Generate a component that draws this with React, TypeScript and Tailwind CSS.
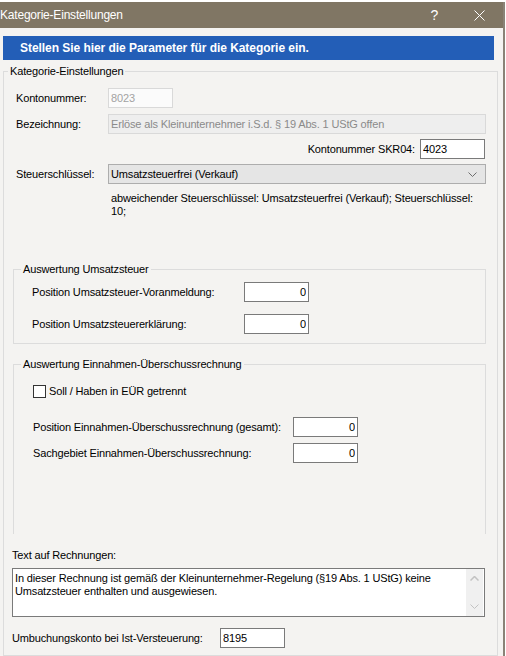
import React from 'react';

// Editable text box in the classic Windows style
const Field: React.FC<{ value: string; width: string; right?: boolean }> = ({ value, width, right }) => (
  <input
    readOnly
    value={value}
    className={`${width} h-[20px] shrink-0 bg-white border border-[#7a7a7a] px-[2px] text-[11px] text-black outline-none ${
      right ? 'text-right' : ''
    }`}
  />
);

const ChevronDown: React.FC<{ color?: string }> = ({ color = '#6d6d6d' }) => (
  <svg width="9" height="5" viewBox="0 0 9 5" fill="none">
    <path d="M0.5 0.5 L4.5 4.5 L8.5 0.5" stroke={color} strokeWidth="1" />
  </svg>
);

const ChevronUp: React.FC<{ color?: string }> = ({ color = '#c2c2c2' }) => (
  <svg width="9" height="5" viewBox="0 0 9 5" fill="none">
    <path d="M0.5 4.5 L4.5 0.5 L8.5 4.5" stroke={color} strokeWidth="1.5" />
  </svg>
);

export default function App() {
  return (
    <div className="w-[506px] h-[656px] overflow-hidden bg-white flex flex-col font-['Liberation_Sans',Arial,sans-serif] text-[11px] tracking-[-0.15px] text-black">
      <div className="h-[2px] shrink-0 bg-white" />

      {/* dialog window */}
      <div className="flex-1 min-h-0 w-[505px] flex flex-col bg-[#f4f3f1] border-r-2 border-[#8a8377]">
        {/* title bar */}
        <div className="h-[26px] shrink-0 bg-[#807664] flex items-center text-white text-[12px] tracking-[-0.2px]">
          <span>Kategorie-Einstellungen</span>
          <span className="ml-auto text-[14px] leading-none">?</span>
          <svg className="ml-[36px] mr-[18px]" width="11" height="11" viewBox="0 0 11 11" fill="none">
            <path d="M0.5 0.5 L10.5 10.5 M10.5 0.5 L0.5 10.5" stroke="#ffffff" strokeWidth="1" />
          </svg>
        </div>

        {/* header banner */}
        <div className="mt-[8px] ml-[3px] w-[491px] h-[24px] shrink-0 bg-[#235eb7] flex items-center pl-[17px] text-white font-bold text-[12px] tracking-[-0.05px]">
          Stellen Sie hier die Parameter für die Kategorie ein.
        </div>

        <fieldset className="mt-[4px] ml-[3px] w-[495px] flex-1 min-h-0 min-w-0 border border-[#dcdcdc]">
          <legend className="ml-[4px] px-[2px] leading-[14px]">Kategorie-Einstellungen</legend>

          <div className="pt-[10px] flex flex-col">
            <div className="flex items-center h-[20px] pl-[12px]">
              <span className="w-[92px]">Kontonummer:</span>
              <input
                readOnly
                value="8023"
                className="w-[65px] h-[20px] bg-[#fbfbfb] border border-[#d9d9d9] px-[2px] text-[11px] text-[#a3a3a3] outline-none"
              />
            </div>

            <div className="flex items-center h-[20px] pl-[12px] mt-[6px]">
              <span className="w-[92px]">Bezeichnung:</span>
              <input
                readOnly
                value="Erlöse als Kleinunternehmer i.S.d. § 19 Abs. 1 UStG offen"
                className="w-[378px] h-[20px] bg-[#eeeeee] border border-[#d9d9d9] px-[2px] text-[11px] text-[#8a8a8a] outline-none"
              />
            </div>

            <div className="flex items-center justify-end gap-[5px] h-[20px] pr-[12px] mt-[5px]">
              <span>Kontonummer SKR04:</span>
              <Field value="4023" width="w-[65px]" />
            </div>

            <div className="flex items-center h-[20px] pl-[12px] mt-[5px]">
              <span className="w-[92px]">Steuerschlüssel:</span>
              <div className="w-[378px] h-[20px] bg-[#e5e5e5] border border-[#adadad] flex items-center pl-[2px] pr-[8px]">
                <span className="flex-1">Umsatzsteuerfrei (Verkauf)</span>
                <ChevronDown />
              </div>
            </div>

            <div className="mt-[8px] pl-[107px] leading-[13px]">
              <div>abweichender Steuerschlüssel: Umsatzsteuerfrei (Verkauf); Steuerschlüssel:</div>
              <div>10;</div>
            </div>

            {/* VAT evaluation */}
            <fieldset className="mt-[44px] ml-[9px] w-[473px] min-w-0 border border-[#dcdcdc] pb-[9px]">
              <legend className="ml-[7px] px-[2px] leading-[14px]">Auswertung Umsatzsteuer</legend>
              <div className="flex items-center h-[20px] pl-[18px] mt-[6px]">
                <span className="w-[212px]">Position Umsatzsteuer-Voranmeldung:</span>
                <Field value="0" width="w-[65px]" right />
              </div>
              <div className="flex items-center h-[20px] pl-[18px] mt-[12px]">
                <span className="w-[212px]">Position Umsatzsteuererklärung:</span>
                <Field value="0" width="w-[65px]" right />
              </div>
            </fieldset>

            {/* cash-basis accounting evaluation */}
            <fieldset className="mt-[13px] ml-[9px] w-[473px] min-w-0 border border-b-0 border-[#dcdcdc] pb-[71px]">
              <legend className="ml-[7px] px-[2px] leading-[14px]">Auswertung Einnahmen-Überschussrechnung</legend>
              <div className="flex items-center gap-[3px] h-[13px] pl-[19px] mt-[14px]">
                <div className="w-[13px] h-[13px] border border-[#333333] bg-white" />
                <span>Soll / Haben in EÜR getrennt</span>
              </div>
              <div className="flex items-center h-[20px] pl-[19px] mt-[19px]">
                <span className="w-[260px]">Position Einnahmen-Überschussrechnung (gesamt):</span>
                <Field value="0" width="w-[65px]" right />
              </div>
              <div className="flex items-center h-[20px] pl-[19px] mt-[6px]">
                <span className="w-[260px]">Sachgebiet Einnahmen-Überschussrechnung:</span>
                <Field value="0" width="w-[65px]" right />
              </div>
            </fieldset>

            <div className="mt-[14px] pl-[8px] leading-[14px]">Text auf Rechnungen:</div>

            <div className="mt-[6px] ml-[8px] w-[473px] h-[49px] bg-white border border-[#7a7a7a] flex">
              <div className="flex-1 pl-[2px] pt-[3px] leading-[13px]">
                In dieser Rechnung ist gemäß der Kleinunternehmer-Regelung (§19 Abs. 1 UStG) keine
                <br />
                Umsatzsteuer enthalten und ausgewiesen.
              </div>
              <div className="w-[17px] mr-[1px] bg-[#f0f0f0] flex flex-col items-center justify-between py-[7px]">
                <ChevronUp />
                <ChevronDown color="#c2c2c2" />
              </div>
            </div>

            <div className="flex items-center h-[20px] pl-[8px] mt-[11px]">
              <span className="w-[208px]">Umbuchungskonto bei Ist-Versteuerung:</span>
              <Field value="8195" width="w-[65px]" />
            </div>
          </div>
        </fieldset>
      </div>
    </div>
  );
}
